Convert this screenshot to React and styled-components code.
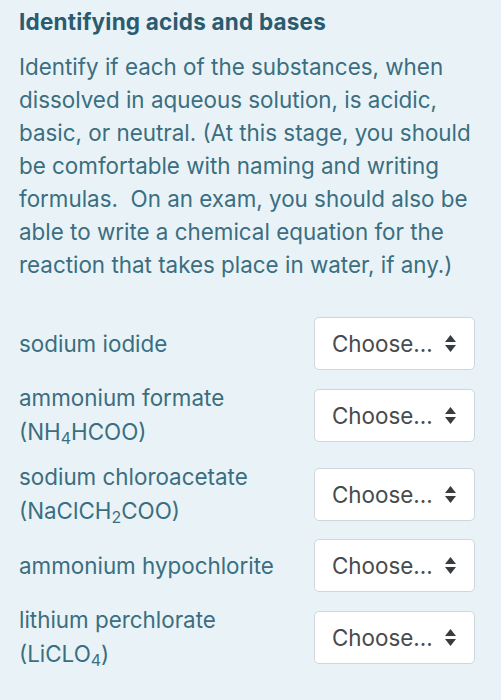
import React from "react";
import styled, { createGlobalStyle } from "styled-components";

const Global = createGlobalStyle`
  html, body { margin: 0; padding: 0; background: #e9f3f7; }
  body { font-family: Inter, "Liberation Sans", sans-serif; -webkit-font-smoothing: antialiased; }
`;

const Page = styled.div`
  width: 501px;
  height: 700px;
  box-sizing: border-box;
  padding: 7px 26px 0 19px;
  background: #e9f3f7;
  overflow: hidden;
`;

const Title = styled.h1`
  margin: 0;
  font-size: 22.5px;
  line-height: 30px;
  font-weight: 700;
  color: #2a5b70;
  letter-spacing: 0.2px;
`;

const Body = styled.p`
  margin: 13px 0 0;
  font-size: 22.4px;
  line-height: 33px;
  color: #3b6e80;
  letter-spacing: 0;
`;

const List = styled.div`
  margin-top: 36px;
  display: flex;
  flex-direction: column;
  gap: 11px;
`;

const Row = styled.div`
  display: grid;
  grid-template-columns: 1fr 161px;
  align-items: center;
  column-gap: 8px;
`;

const Label = styled.div`
  font-size: 22.4px;
  line-height: 34px;
  color: #3b6e80;
`;

const Sub = styled.sub`
  font-size: 16px;
  line-height: 0;
  vertical-align: -4px;
`;

const Select = styled.div`
  height: 53px;
  box-sizing: border-box;
  border: 1.5px solid #cfd7dc;
  border-radius: 5px;
  background: #ffffff;
  display: flex;
  align-items: center;
  padding-left: 17px;
  gap: 12px;
  font-size: 22.4px;
  color: #474b4e;
`;

const Arrows = styled.svg`
  width: 11px;
  height: 17px;
  flex: none;
`;

function Chooser() {
  return (
    <Select>
      <span>Choose...</span>
      <Arrows viewBox="0 0 11 17">
        <path d="M5.5 0 L11 7 L0 7 Z" fill="#3a3d40" />
        <path d="M0 10 L11 10 L5.5 17 Z" fill="#3a3d40" />
      </Arrows>
    </Select>
  );
}

const items = [
  { name: "sodium iodide" },
  { name: "ammonium formate", f: <>(NH<Sub>4</Sub>HCOO)</> },
  { name: "sodium chloroacetate", f: <>(NaClCH<Sub>2</Sub>COO)</> },
  { name: "ammonium hypochlorite" },
  { name: "lithium perchlorate", f: <>(LiCLO<Sub>4</Sub>)</> },
];

export default function App() {
  return (
    <Page>
      <Global />
      <Title>Identifying acids and bases</Title>
      <Body>
        Identify if each of the substances, when dissolved in aqueous solution, is acidic,
        basic, or neutral. (At this stage, you should be comfortable with naming and writing
        formulas.&nbsp; On an exam, you should also be able to write a chemical equation for the
        reaction that takes place in water, if any.)
      </Body>
      <List>
        {items.map((it) => (
          <Row key={it.name}>
            <Label>
              {it.name}
              {it.f && (
                <>
                  <br />
                  {it.f}
                </>
              )}
            </Label>
            <Chooser />
          </Row>
        ))}
      </List>
    </Page>
  );
}
